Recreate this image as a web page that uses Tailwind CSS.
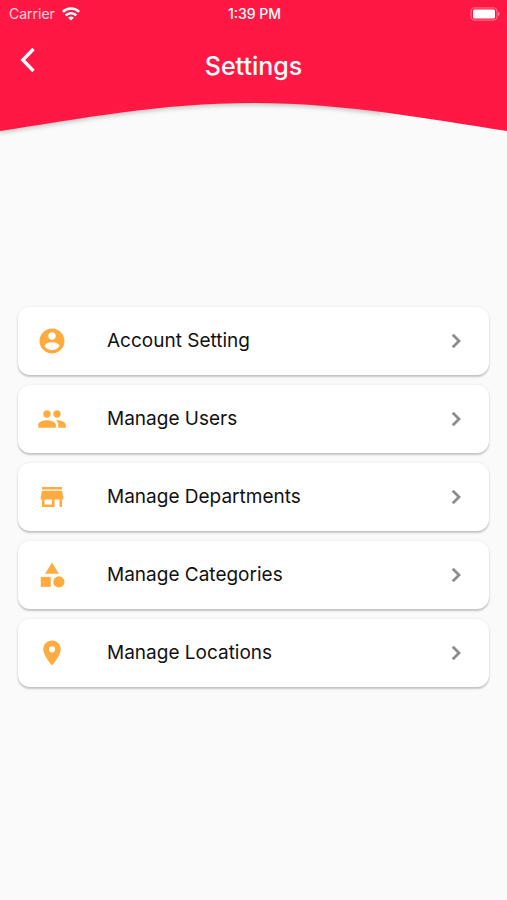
<!DOCTYPE html>
<html lang="en">
<head>
  <meta charset="UTF-8" />
  <meta name="viewport" content="width=device-width, initial-scale=1" />
  <title>Settings</title>
  <script src="https://cdn.jsdelivr.net/npm/@tailwindcss/browser@4"></script>
</head>
<body class="bg-[#fafafa] min-h-screen font-['Inter',sans-serif] text-[#111]">

  <header class="text-white">
    <div class="bg-[#ff1844]">
      <!-- Status bar -->
      <div class="grid grid-cols-3 items-center h-7 pl-[9px] pr-[7px] text-sm">
        <div class="flex items-center gap-[7px] text-white/80">
          <span>Carrier</span>
          <svg class="w-[18px] h-[14px] text-white" viewBox="0 0 18 14" fill="none" stroke="currentColor" stroke-width="2.5">
            <path d="M0.8 4.900a11.6 11.6 0 0 1 16.400 0" />
            <path d="M3.700 8.400a7.500 7.500 0 0 1 10.600 0" />
            <path d="M9 13.600 6.100 10.800a4.200 4.200 0 0 1 5.800 0z" fill="currentColor" stroke="none" />
          </svg>
        </div>
        <span class="text-center font-medium">1:39 PM</span>
        <svg class="justify-self-end w-[30px] h-[14px]" viewBox="0 0 30 14">
          <rect x="1" y="0.8" width="26" height="12.4" rx="3.6" fill="none" stroke="#fff" stroke-opacity=".35" stroke-width="1.2" />
          <rect x="3" y="2.6" width="22" height="8.8" rx="1.5" fill="#fff" />
          <path d="M28.2 4.8c1.7.6 1.7 3.8 0 4.4z" fill="#fff" fill-opacity=".5" />
        </svg>
      </div>

      <!-- Title row -->
      <div class="grid grid-cols-[48px_1fr_48px] h-[72px] px-1">
        <button type="button" aria-label="Back" class="flex justify-center pt-[18px]">
          <svg class="w-7 h-7" viewBox="0 0 28 28" fill="none" stroke="currentColor" stroke-width="3.3">
            <path d="M19.500 3 8.800 14l10.700 11" />
          </svg>
        </button>
        <h1 class="text-center text-[25px] leading-8 font-medium pt-[22px]">Settings</h1>
      </div>
    </div>

    <!-- Curved bottom edge -->
    <svg class="block w-full h-10" viewBox="0 0 507 40" preserveAspectRatio="none">
      <defs>
        <filter id="soft" x="-5%" y="-20%" width="110%" height="150%"><feGaussianBlur stdDeviation="2" /></filter>
        <linearGradient id="fade" x1="0" x2="1">
          <stop offset="0" stop-color="#000" stop-opacity=".22" />
          <stop offset=".74" stop-color="#000" stop-opacity=".24" />
          <stop offset=".79" stop-color="#000" stop-opacity="0" />
        </linearGradient>
      </defs>
      <path d="M0 0V33C80 21 160 5 253 5S427 21 507 33V0z" fill="url(#fade)" filter="url(#soft)" />
      <path d="M0 0V31C80 19 160 3 253 3S427 19 507 31V0z" fill="#ff1844" />
    </svg>
  </header>

  <main class="px-[18px] pt-[167px] pb-10">
    <ul class="space-y-2.5">
      <li>
        <a href="#account" class="flex items-center h-[68px] bg-white rounded-xl px-[19px] shadow-[0_2px_2px_rgba(0,0,0,0.2),0_0_3px_rgba(0,0,0,0.08)]">
          <svg class="w-[30px] h-[30px] fill-[#ffab40]" viewBox="0 0 24 24"><path d="M12 2C6.480 2 2 6.480 2 12s4.480 10 10 10 10-4.480 10-10S17.520 2 12 2zm0 3c1.660 0 3 1.340 3 3s-1.340 3-3 3-3-1.340-3-3 1.340-3 3-3zm0 14.200c-2.500 0-4.710-1.280-6-3.220.030-1.990 4-3.080 6-3.080 1.990 0 5.970 1.090 6 3.080-1.290 1.940-3.500 3.220-6 3.220z" /></svg>
          <span class="flex-1 pl-10 text-[19px]">Account Setting</span>
          <svg class="w-7 h-7 fill-[#8a8a8a] stroke-[#8a8a8a]" viewBox="0 0 24 24" stroke-width=".4"><path d="M10 6 8.590 7.410 13.170 12l-4.580 4.590L10 18l6-6z" /></svg>
        </a>
      </li>
      <li>
        <a href="#users" class="flex items-center h-[68px] bg-white rounded-xl px-[19px] shadow-[0_2px_2px_rgba(0,0,0,0.2),0_0_3px_rgba(0,0,0,0.08)]">
          <svg class="w-[30px] h-[30px] fill-[#ffab40]" viewBox="0 0 24 24"><path d="M16 11c1.660 0 2.990-1.340 2.990-3S17.660 5 16 5s-3 1.340-3 3 1.340 3 3 3zm-8 0c1.660 0 2.990-1.340 2.990-3S9.660 5 8 5 5 6.340 5 8s1.340 3 3 3zm0 2c-2.330 0-7 1.170-7 3.500V19h14v-2.500c0-2.330-4.670-3.500-7-3.500zm8 0c-.290 0-.620.020-.970.050 1.160.840 1.970 1.970 1.970 3.450V19h6v-2.500c0-2.330-4.670-3.500-7-3.500z" /></svg>
          <span class="flex-1 pl-10 text-[19px]">Manage Users</span>
          <svg class="w-7 h-7 fill-[#8a8a8a] stroke-[#8a8a8a]" viewBox="0 0 24 24" stroke-width=".4"><path d="M10 6 8.590 7.410 13.170 12l-4.580 4.590L10 18l6-6z" /></svg>
        </a>
      </li>
      <li>
        <a href="#departments" class="flex items-center h-[68px] bg-white rounded-xl px-[19px] shadow-[0_2px_2px_rgba(0,0,0,0.2),0_0_3px_rgba(0,0,0,0.08)]">
          <svg class="w-[30px] h-[30px] fill-[#ffab40]" viewBox="0 0 24 24"><path d="M20 4H4v2h16V4zm1 10v-2l-1-5H4l-1 5v2h1v6h10v-6h4v6h2v-6h1zm-9 4H6v-4h6v4z" /></svg>
          <span class="flex-1 pl-10 text-[19px]">Manage Departments</span>
          <svg class="w-7 h-7 fill-[#8a8a8a] stroke-[#8a8a8a]" viewBox="0 0 24 24" stroke-width=".4"><path d="M10 6 8.590 7.410 13.170 12l-4.580 4.590L10 18l6-6z" /></svg>
        </a>
      </li>
      <li>
        <a href="#categories" class="flex items-center h-[68px] bg-white rounded-xl px-[19px] shadow-[0_2px_2px_rgba(0,0,0,0.2),0_0_3px_rgba(0,0,0,0.08)]">
          <svg class="w-[30px] h-[30px] fill-[#ffab40]" viewBox="0 0 24 24"><path d="m12 2-5.500 9h11z" /><circle cx="17.500" cy="17.500" r="4.500" /><path d="M3 13.500h8v8H3z" /></svg>
          <span class="flex-1 pl-10 text-[19px]">Manage Categories</span>
          <svg class="w-7 h-7 fill-[#8a8a8a] stroke-[#8a8a8a]" viewBox="0 0 24 24" stroke-width=".4"><path d="M10 6 8.590 7.410 13.170 12l-4.580 4.590L10 18l6-6z" /></svg>
        </a>
      </li>
      <li>
        <a href="#locations" class="flex items-center h-[68px] bg-white rounded-xl px-[19px] shadow-[0_2px_2px_rgba(0,0,0,0.2),0_0_3px_rgba(0,0,0,0.08)]">
          <svg class="w-[30px] h-[30px] fill-[#ffab40]" viewBox="0 0 24 24"><path d="M12 2C8.130 2 5 5.130 5 9c0 5.250 7 13 7 13s7-7.750 7-13c0-3.870-3.130-7-7-7zm0 9.500a2.500 2.500 0 1 1 0-5 2.500 2.500 0 0 1 0 5z" /></svg>
          <span class="flex-1 pl-10 text-[19px]">Manage Locations</span>
          <svg class="w-7 h-7 fill-[#8a8a8a] stroke-[#8a8a8a]" viewBox="0 0 24 24" stroke-width=".4"><path d="M10 6 8.590 7.410 13.170 12l-4.580 4.590L10 18l6-6z" /></svg>
        </a>
      </li>
    </ul>
  </main>

</body>
</html>
